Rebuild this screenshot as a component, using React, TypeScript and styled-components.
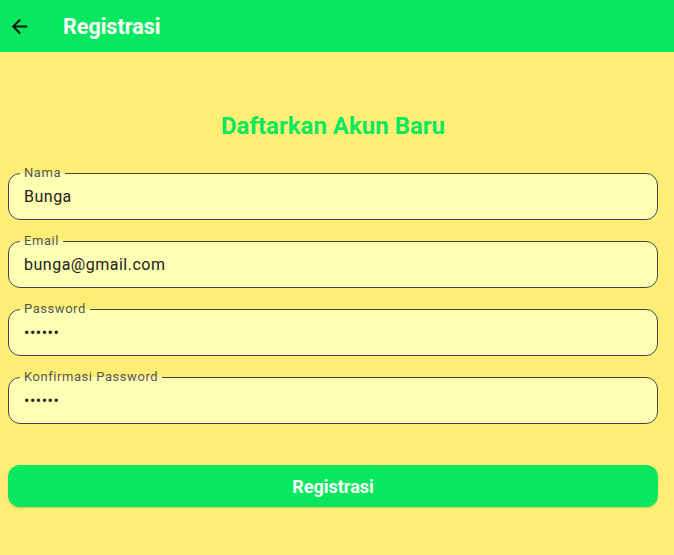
import React from 'react';
import styled, { createGlobalStyle } from 'styled-components';

const GREEN = '#08e85e';
const YELLOW = '#ffee76';
const FILL = '#ffffb3';

const GlobalStyle = createGlobalStyle`
  html, body {
    margin: 0;
    padding: 0;
    background: ${YELLOW};
    font-family: Roboto, 'Liberation Sans', sans-serif;
  }
`;

const Page = styled.div`
  min-height: 100vh;
  background: ${YELLOW};
`;

const AppBar = styled.header`
  height: 52px;
  display: flex;
  align-items: center;
  background: ${GREEN};
  padding: 0 0 0 7px;
  box-sizing: border-box;
`;

const BackButton = styled.button`
  width: 24px;
  height: 24px;
  padding: 0;
  border: none;
  background: none;
  display: flex;
  align-items: center;
  justify-content: center;
`;

const AppTitle = styled.h1`
  margin: 0 0 0 32px;
  color: #fff;
  font-size: 21.5px;
  font-weight: 700;
`;

const Body = styled.main`
  padding: 0 16px 0 8px;
  display: flex;
  flex-direction: column;
`;

const Heading = styled.h2`
  margin: 60px 0 26px;
  text-align: center;
  color: ${GREEN};
  font-size: 24px;
  line-height: 28px;
  font-weight: 700;
`;

const Form = styled.form`
  display: flex;
  flex-direction: column;
  gap: 14px;
`;

const Field = styled.fieldset`
  margin: 0;
  padding: 0 15px;
  border: 1px solid #444;
  border-radius: 12px;
  background: ${FILL};
  min-width: 0;
`;

const Legend = styled.legend`
  padding: 0 4px;
  margin-left: -4px;
  font-size: 13px;
  line-height: 14px;
  color: #555;
  letter-spacing: 0.55px;
`;

const Input = styled.input`
  display: block;
  width: 100%;
  box-sizing: border-box;
  height: 32px;
  margin: 0 0 7px;
  padding: 0;
  border: none;
  outline: none;
  background: transparent;
  font-family: Roboto, 'Liberation Sans', sans-serif;
  font-size: 16px;
  color: #222;
  letter-spacing: 0.5px;
`;

const SubmitButton = styled.button`
  margin-top: 41px;
  height: 42px;
  border: none;
  border-radius: 12px;
  background: ${GREEN};
  color: #fff;
  font-family: Roboto, 'Liberation Sans', sans-serif;
  font-size: 18px;
  font-weight: 700;
  letter-spacing: 0;
  box-shadow: 0 1px 2px rgba(0, 0, 0, 0.2);
`;

const fields = [
  { label: 'Nama', value: 'Bunga', type: 'text' },
  { label: 'Email', value: 'bunga@gmail.com', type: 'text' },
  { label: 'Password', value: 'bunga1', type: 'password' },
  { label: 'Konfirmasi Password', value: 'bunga1', type: 'password' },
];

const App: React.FC = () => {
  return (
    <Page>
      <GlobalStyle />
      <AppBar>
        <BackButton aria-label="Kembali">
          <svg width="23" height="23" viewBox="0 0 24 24">
            <path d="M20 11H7.83l5.59-5.59L12 4l-8 8 8 8 1.41-1.41L7.83 13H20v-2z" fill="#111" />
          </svg>
        </BackButton>
        <AppTitle>Registrasi</AppTitle>
      </AppBar>
      <Body>
        <Heading>Daftarkan Akun Baru</Heading>
        <Form onSubmit={(e) => e.preventDefault()}>
          {fields.map((f) => (
            <Field key={f.label}>
              <Legend>{f.label}</Legend>
              <Input type={f.type} defaultValue={f.value} readOnly />
            </Field>
          ))}
        </Form>
        <SubmitButton type="button">Registrasi</SubmitButton>
      </Body>
    </Page>
  );
};

export default App;
